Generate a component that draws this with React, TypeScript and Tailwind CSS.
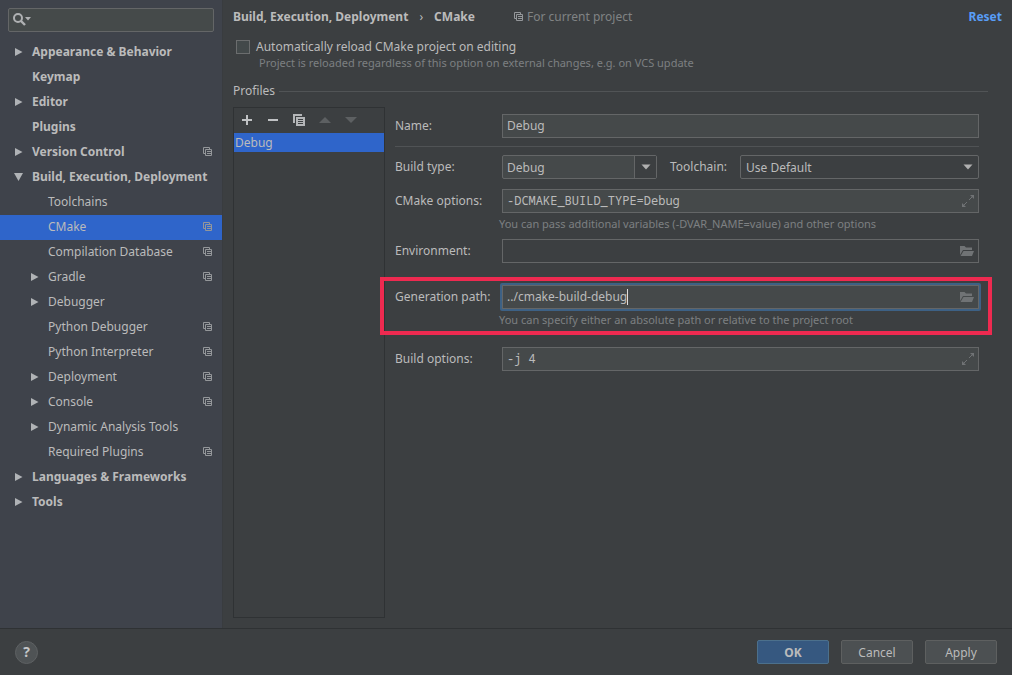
import type { ReactNode } from "react";

type Node = {
  label: string;
  level: 0 | 1;
  state?: "open" | "closed";
  project?: boolean;
  selected?: boolean;
};

const nodes: Node[] = [
  { label: "Appearance & Behavior", level: 0, state: "closed" },
  { label: "Keymap", level: 0 },
  { label: "Editor", level: 0, state: "closed" },
  { label: "Plugins", level: 0 },
  { label: "Version Control", level: 0, state: "closed", project: true },
  { label: "Build, Execution, Deployment", level: 0, state: "open" },
  { label: "Toolchains", level: 1 },
  { label: "CMake", level: 1, project: true, selected: true },
  { label: "Compilation Database", level: 1, project: true },
  { label: "Gradle", level: 1, state: "closed", project: true },
  { label: "Debugger", level: 1, state: "closed" },
  { label: "Python Debugger", level: 1, project: true },
  { label: "Python Interpreter", level: 1, project: true },
  { label: "Deployment", level: 1, state: "closed", project: true },
  { label: "Console", level: 1, state: "closed", project: true },
  { label: "Dynamic Analysis Tools", level: 1, state: "closed" },
  { label: "Required Plugins", level: 1, project: true },
  { label: "Languages & Frameworks", level: 0, state: "closed" },
  { label: "Tools", level: 0, state: "closed" },
];

function ProjectIcon() {
  return (
    <svg width="10" height="10" viewBox="0 0 10 10" fill="none" stroke="#94979a" className="shrink-0">
      <path d="M2 6.500H.5v-6h6V2" />
      <path d="M2.500 2.500h6v6h-6z" />
      <path d="M4 4.500h4M4 6.500h4" />
    </svg>
  );
}

function Twisty({ state }: { state?: "open" | "closed" }) {
  return (
    <svg width="9" height="10" viewBox="0 0 9 10" fill="#b0b3b6" className="shrink-0">
      {state === "closed" && <path d="M1 1v8l7.500-4z" />}
      {state === "open" && <path d="M0 1h9L4.500 9z" />}
    </svg>
  );
}

function DownArrow() {
  return (
    <svg width="10" height="6" viewBox="0 0 10 6" fill="#b0b0b0">
      <path d="M.5.5h9L5 5.500z" />
    </svg>
  );
}

function ExpandIcon() {
  return (
    <svg width="12" height="12" viewBox="0 0 12 12" fill="#707375">
      <path d="M8 0h4v4zM0 8v4h4z" />
      <path d="M10 2 7 5M2 10l3-3" stroke="#707375" />
    </svg>
  );
}

function FolderIcon() {
  return (
    <svg width="14" height="12" viewBox="0 0 14 12" fill="#707375">
      <path d="M0 1h4.500l1.500 1.500h6V5H3L0 10z" />
      <path d="M3.500 6H14l-2 5H.5z" />
    </svg>
  );
}

const field = "h-6 w-full border border-[#646667] px-1 pb-[2px] text-[#bbbbbb] outline-none";

function TextField({
  id,
  value,
  tone = "bg-[#45494a]",
  mono,
  icon,
  children,
}: {
  id: string;
  value: string;
  tone?: string;
  mono?: boolean;
  icon?: ReactNode;
  children?: ReactNode;
}) {
  return (
    <div className="relative h-6">
      <input
        id={id}
        defaultValue={value}
        className={`block ${field} ${tone} ${mono ? "font-['Noto_Sans_Mono','DejaVu_Sans_Mono',monospace]" : ""}`}
      />
      {icon && <span className="absolute inset-y-0 right-[5px] flex items-center">{icon}</span>}
      {children}
    </div>
  );
}

function Hint({ children }: { children: ReactNode }) {
  return <p className="-ml-[3px] pt-[3px] text-[11px] leading-4 text-[#7d8082]">{children}</p>;
}

function Field({ id, label, children }: { id: string; label: string; children: ReactNode }) {
  return (
    <div className="grid grid-cols-[107px_1fr]">
      <label htmlFor={id} className="h-6 leading-6">
        {label}
      </label>
      <div>{children}</div>
    </div>
  );
}

function Sidebar() {
  return (
    <aside className="w-[223px] shrink-0 border-r border-[#393c3f] bg-[#3f434b]">
      <div className="relative pt-2 pr-2 pl-2">
        <input
          aria-label="Search settings"
          className="block h-6 w-full rounded-[2px] border border-[#646667] bg-[#454a4a] pl-7 outline-none"
        />
        <svg width="20" height="14" viewBox="0 0 20 14" className="absolute top-3 left-3" fill="none" stroke="#afb1b3">
          <circle cx="6" cy="6" r="4" strokeWidth="2" />
          <path d="m9 9 4 4" strokeWidth="2.400" />
          <path d="M13 5h6l-3 3.500z" fill="#afb1b3" stroke="none" />
        </svg>
      </div>
      <ul className="pt-2">
        {nodes.map((n) => (
          <li key={n.label}>
            <a
              href="#"
              className={`flex h-[25px] items-center gap-[9px] pr-[9px] pb-px ${n.level ? "pl-[30px]" : "pl-[14px] font-bold"} ${n.selected ? "bg-[#2f65ca]" : ""}`}
            >
              <Twisty state={n.state} />
              <span className="flex-1 whitespace-nowrap">{n.label}</span>
              {n.project && <ProjectIcon />}
            </a>
          </li>
        ))}
      </ul>
    </aside>
  );
}

function Profiles() {
  const tool = "flex h-6 w-[26px] items-center justify-center";
  return (
    <section className="flex w-[152px] shrink-0 flex-col border border-[#2f3234]">
      <div className="flex h-[25px] items-start">
        <button aria-label="Add" className={tool}>
          <svg width="10" height="10" viewBox="0 0 10 10" stroke="#c0c2c4" strokeWidth="2">
            <path d="M5 0v10M0 5h10" />
          </svg>
        </button>
        <button aria-label="Remove" className={tool}>
          <svg width="10" height="10" viewBox="0 0 10 10" stroke="#c0c2c4" strokeWidth="2">
            <path d="M0 5h10" />
          </svg>
        </button>
        <button aria-label="Copy" className={tool}>
          <svg width="12" height="12" viewBox="0 0 12 12" fill="#b4b6b8">
            <path d="M0 0h9v2H2v7H0z" />
            <path fillRule="evenodd" d="M3 3h9v9H3zM5 5v1h5V5zM5 7v1h5V7zM5 9v1h5V9z" />
          </svg>
        </button>
        <button aria-label="Move up" disabled className={tool}>
          <svg width="12" height="6" viewBox="0 0 12 6" fill="#5d6062">
            <path d="M6 0l6 6H0z" />
          </svg>
        </button>
        <button aria-label="Move down" disabled className={tool}>
          <svg width="12" height="6" viewBox="0 0 12 6" fill="#5d6062">
            <path d="M0 0h12L6 6z" />
          </svg>
        </button>
      </div>
      <ul>
        <li className="h-[19px] bg-[#2f65ca] pl-px leading-[19px]">Debug</li>
      </ul>
    </section>
  );
}

function ProfileForm() {
  return (
    <form className="min-w-0 flex-1 pt-[7px] pr-[9px]">
      <Field id="name" label="Name:">
        <TextField id="name" value="Debug" />
      </Field>
      <hr className="my-2 border-[#505355]" />
      <div className="grid grid-cols-[107px_155px_83px_1fr] leading-6">
        <label htmlFor="type">Build type:</label>
        <div className="relative h-6">
          <select id="type" className={`block ${field} appearance-none rounded-[2px] bg-[#45494a]`}>
            <option>Debug</option>
          </select>
          <span className="pointer-events-none absolute top-px right-px flex h-[22px] w-[22px] items-center justify-center border-l border-[#646667] bg-[#3c3f41]">
            <DownArrow />
          </span>
        </div>
        <label htmlFor="toolchain" className="pl-[13px]">
          Toolchain:
        </label>
        <div className="relative h-6">
          <select id="toolchain" className={`block ${field} appearance-none rounded-[2px] bg-[#3c3f41] pl-[5px]`}>
            <option>Use Default</option>
          </select>
          <span className="pointer-events-none absolute inset-y-0 right-[6px] flex items-center">
            <DownArrow />
          </span>
        </div>
      </div>
      <div className="pt-[10px]">
        <Field id="options" label="CMake options:">
          <TextField id="options" value="-DCMAKE_BUILD_TYPE=Debug" mono icon={<ExpandIcon />} />
          <Hint>You can pass additional variables (-DVAR_NAME=value) and other options</Hint>
        </Field>
      </div>
      <div className="pt-[7px]">
        <Field id="env" label="Environment:">
          <TextField id="env" value="" tone="bg-[#3c3f41]" icon={<FolderIcon />} />
        </Field>
      </div>
      <div className="relative mt-[22px]">
        <Field id="path" label="Generation path:">
          <TextField id="path" value="../cmake-build-debug" icon={<FolderIcon />}>
            <span className="pointer-events-none absolute -inset-[2px] rounded-[2px] border-2 border-[#3d6185]" />
            <span className="absolute top-1 left-[125px] h-4 w-px bg-[#dddddd]" />
          </TextField>
          <Hint>You can specify either an absolute path or relative to the project root</Hint>
        </Field>
        <span className="pointer-events-none absolute -top-2 -right-[13px] -bottom-[7px] -left-[15px] border-4 border-[#ee2a50]" />
      </div>
      <div className="pt-[19px]">
        <Field id="build" label="Build options:">
          <TextField id="build" value="-j 4" mono icon={<ExpandIcon />} />
        </Field>
      </div>
    </form>
  );
}

export default function App() {
  const button = "h-6 w-[72px] rounded-[2px] border leading-6";
  return (
    <div className="flex min-h-screen flex-col bg-[#3c3f41] font-['Noto_Sans',sans-serif] text-[12px] leading-4 text-[#bbbbbb]">
      <div className="flex flex-1">
        <Sidebar />
        <main className="flex min-w-0 flex-1 flex-col pt-[9px] pr-[10px] pb-[10px] pl-[10px]">
          <header className="flex items-center">
            <h1 className="flex gap-[11px] font-bold">
              <span>Build, Execution, Deployment</span>
              <span className="font-normal">›</span>
              <span>CMake</span>
            </h1>
            <span className="flex items-center gap-[3px] pl-[39px] text-[#808384]">
              <ProjectIcon />
              For current project
            </span>
            <a href="#" className="ml-auto font-bold text-[#589df6]">
              Reset
            </a>
          </header>
          <label className="flex items-center gap-[6px] pt-[14px] pl-[3px]">
            <input
              type="checkbox"
              className="size-[14px] appearance-none border border-[#6b6d6e] bg-[#43494a]"
            />
            Automatically reload CMake project on editing
          </label>
          <p className="pl-[26px] text-[11px] text-[#7d8082]">
            Project is reloaded regardless of this option on external changes, e.g. on VCS update
          </p>
          <h2 className="flex items-center gap-1 pt-3 pr-[14px] after:h-px after:flex-1 after:bg-[#515456]">
            Profiles
          </h2>
          <div className="flex flex-1 gap-[10px] pt-2 pr-[14px]">
            <Profiles />
            <ProfileForm />
          </div>
        </main>
      </div>
      <footer className="flex h-[47px] items-center gap-3 border-t border-[#2f3234] pr-[15px] pl-[15px]">
        <button
          aria-label="Help"
          className="mr-auto size-[23px] rounded-full border border-[#5e6163] bg-[#4f5355] text-[14px] leading-5 font-bold text-[#c4c6c8]"
        >
          ?
        </button>
        <button className={`${button} border-[#4c708c] bg-[#365880] font-bold`}>OK</button>
        <button className={`${button} border-[#5e6060] bg-[#4c5052]`}>Cancel</button>
        <button className={`${button} border-[#5e6060] bg-[#4c5052]`}>Apply</button>
      </footer>
    </div>
  );
}
